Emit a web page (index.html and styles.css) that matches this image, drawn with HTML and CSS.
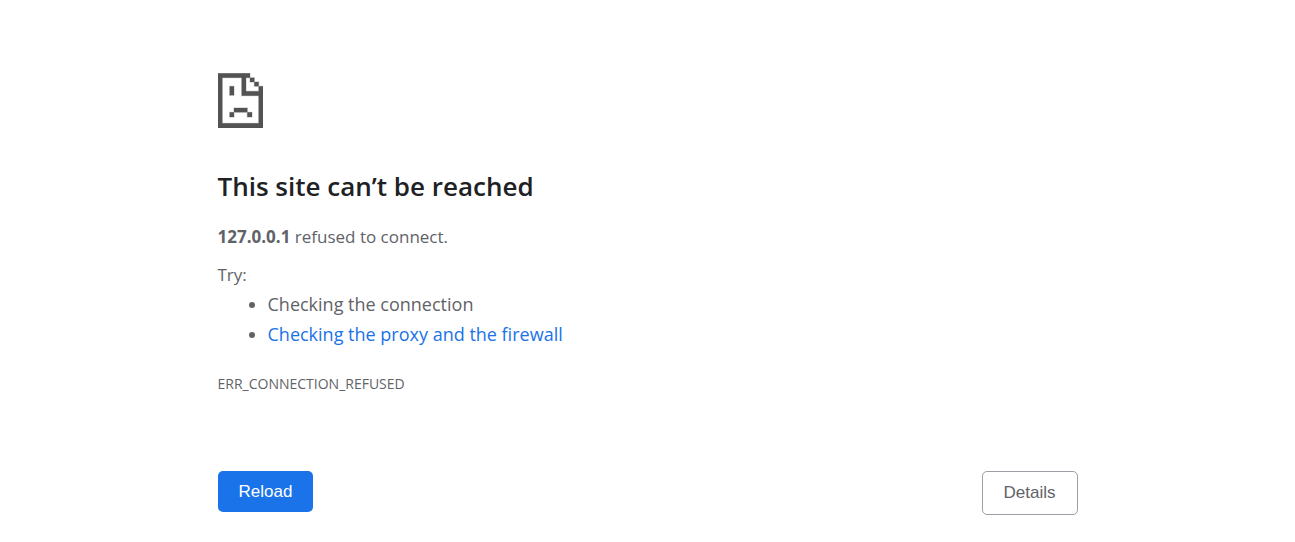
FILE: index.html
```html
<!DOCTYPE html>
<html lang="en">
<head>
<meta charset="utf-8">
<meta name="viewport" content="width=device-width, initial-scale=1">
<title>127.0.0.1</title>
<link rel="stylesheet" href="styles.css">
</head>
<body>
<main class="page">
  <svg class="icon" viewBox="0 0 135 165" aria-hidden="true">
    <path class="ink" fill-rule="evenodd" d="M0 1H96V14H109V27H122V40H135V165H0ZM13 14V151H122V68H71V14ZM84 14V55H122V40H109V27H96V14Z"/>
    <path class="ink" d="M35 40H48V67H35ZM48 105H88V118H48ZM35 118H48V132H35ZM88 118H102V132H88Z"/>
  </svg>
  <h1 class="title">This site can’t be reached</h1>
  <p class="summary"><strong>127.0.0.1</strong> refused to connect.</p>
  <div class="suggestions">
    <p class="try">Try:</p>
    <ul class="list">
      <li>Checking the connection</li>
      <li><a class="link" href="#buttons">Checking the proxy and the firewall</a></li>
    </ul>
  </div>
  <p class="code">ERR_CONNECTION_REFUSED</p>
  <div class="buttons" id="buttons">
    <button class="button primary" type="button">Reload</button>
    <button class="button secondary" type="button">Details</button>
  </div>
</main>
</body>
</html>
```
FILE: styles.css
```css
body {
  margin: 0;
  background: #fff;
  color: #5f6368;
  font: 18px/30px "Segoe UI", "Open Sans", "Noto Sans", sans-serif;
}
.page {
  box-sizing: border-box;
  max-width: 860px;
  margin: 0 auto;
  padding-top: 73px;
}
.icon {
  display: block;
  width: 45px;
  height: 55px;
}
.ink {
  fill: #535353;
  stroke: #535353;
  stroke-opacity: 0.25;
  stroke-width: 4px;
}
.title {
  margin: 40px 0 0;
  color: #202124;
  font-size: 26px;
  font-weight: 600;
  line-height: 36px;
}
.summary {
  margin: 18px 0 0;
  font-size: 17px;
}
.suggestions { margin-top: 9px; }
.try {
  margin: 0;
  font-size: 17px;
  line-height: 28px;
}
.list {
  margin: 0;
  padding-left: 50px;
}
.link {
  color: #1a73e8;
  text-decoration: none;
}
.code {
  margin: 23px 0 0;
  font-size: 14px;
  line-height: 24px;
}
.buttons {
  display: flex;
  justify-content: space-between;
  align-items: flex-start;
  margin-top: 75px;
}
.button {
  padding: 10px 21px;
  border: 0;
  border-radius: 5px;
  font: 17px/21px "Liberation Sans", Arial, sans-serif;
  cursor: pointer;
}
.primary {
  background: #1a73e8;
  color: #fff;
}
.secondary {
  border: 1px solid #9aa0a6;
  background: #fff;
  color: #5f6368;
  line-height: 22px;
}
```
